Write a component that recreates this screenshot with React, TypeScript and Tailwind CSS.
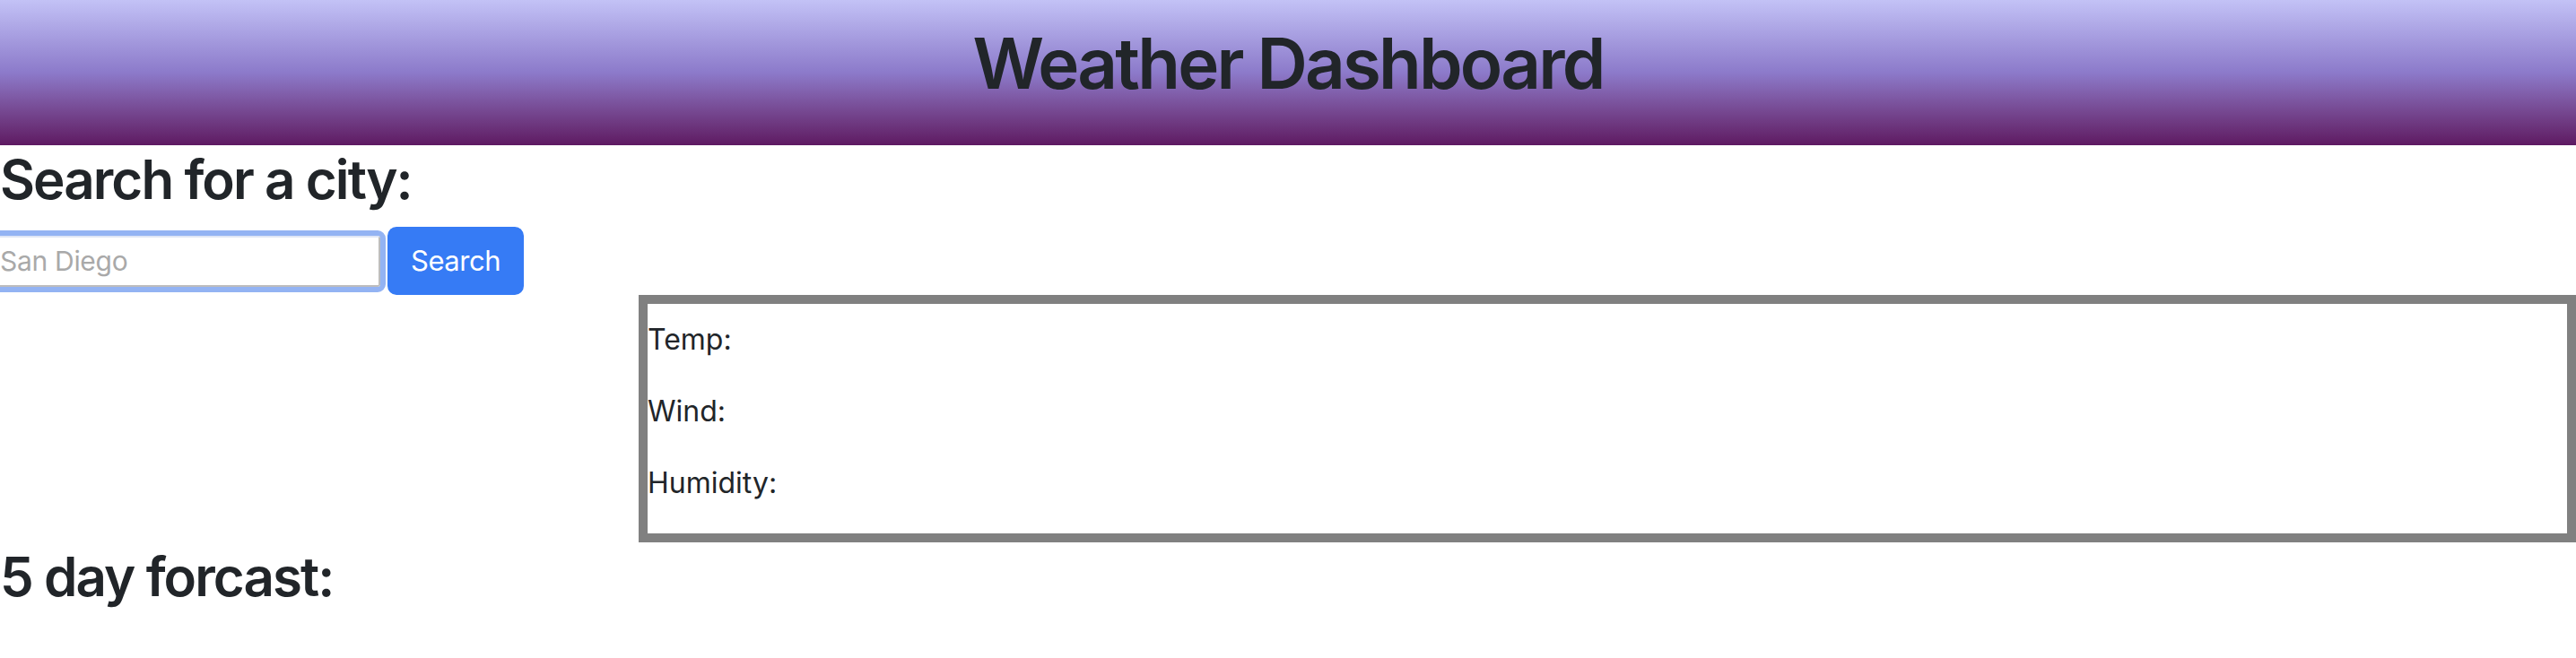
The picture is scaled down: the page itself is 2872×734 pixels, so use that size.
import React from "react";

const font = "font-['Inter','Noto_Sans',sans-serif]";

export default function App() {
  return (
    <div className={`w-[2872px] min-h-[734px] bg-white text-[#212529] ${font} overflow-hidden`}>
      {/* Header */}
      <header className="h-[162px] bg-gradient-to-b from-[#c3c2f6] via-[#8c7aca] to-[#5e1962] pt-[24px] text-center">
        <h1 className="text-[78px] leading-[1.2] font-semibold tracking-[-0.036em]">Weather Dashboard</h1>
      </header>

      {/* Search */}
      <h2 className="text-[60px] leading-[77px] font-semibold tracking-[-0.032em]">Search for a city:</h2>
      <div className="mt-[14px] flex h-[76px] items-center gap-[8px]">
        <input
          type="text"
          placeholder="San Diego"
          className="-ml-[6px] h-[57px] w-[430px] rounded-[3px] border-2 border-[#bdbdbd] border-t-[#dfe6f5] pl-[4px] text-[30px] tracking-[-0.01em] outline-[6px] outline-solid outline-[#93b3f3] placeholder:text-[#a9a9a9]"
        />
        <button className="h-[76px] rounded-[10px] border-2 border-[#367bf5] bg-[#367bf5] px-[24px] text-[31px] leading-[1.5] tracking-[-0.015em] text-white">
          Search
        </button>
      </div>

      {/* Current weather */}
      <div className="flex">
        <div className="w-[712px] shrink-0" />
        <div className="flex-1 border-[10px] border-[#808080] pt-[16px]">
          <p className="mb-[32px] text-[32px] leading-[48px]">Temp:</p>
          <p className="mb-[32px] text-[32px] leading-[48px]">Wind:</p>
          <p className="mb-[32px] text-[32px] leading-[48px]">Humidity:</p>
        </div>
      </div>

      {/* Forecast */}
      <h2 className="text-[60px] leading-[77px] font-semibold tracking-[-0.032em]">5 day forcast:</h2>
    </div>
  );
}
